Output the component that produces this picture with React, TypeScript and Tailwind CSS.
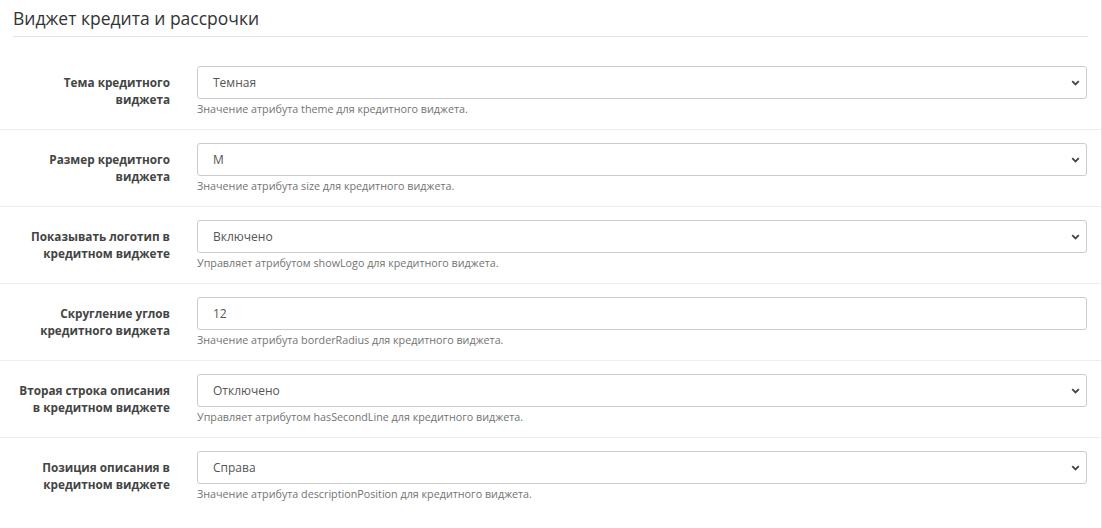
const fields = [
  {
    label: "Тема кредитного виджета",
    value: "Темная",
    help: "Значение атрибута theme для кредитного виджета.",
    select: true,
  },
  {
    label: "Размер кредитного виджета",
    value: "M",
    help: "Значение атрибута size для кредитного виджета.",
    select: true,
  },
  {
    label: "Показывать логотип в кредитном виджете",
    value: "Включено",
    help: "Управляет атрибутом showLogo для кредитного виджета.",
    select: true,
  },
  {
    label: "Скругление углов кредитного виджета",
    value: "12",
    help: "Значение атрибута borderRadius для кредитного виджета.",
    select: false,
  },
  {
    label: "Вторая строка описания в кредитном виджете",
    value: "Отключено",
    help: "Управляет атрибутом hasSecondLine для кредитного виджета.",
    select: true,
  },
  {
    label: "Позиция описания в кредитном виджете",
    value: "Справа",
    help: "Значение атрибута descriptionPosition для кредитного виджета.",
    select: true,
  },
];

function Chevron() {
  return (
    <svg width="9" height="6" viewBox="0 0 9 6" className="text-[#444]">
      <polyline
        points="1.2,1.2 4.5,4.5 7.8,1.2"
        fill="none"
        stroke="currentColor"
        strokeWidth="1.8"
      />
    </svg>
  );
}

export default function App() {
  return (
    <div
      className="min-h-[528px] w-full border-r border-[#e3e3e3] bg-white"
      style={{ fontFamily: '"Open Sans", "Liberation Sans", sans-serif' }}
    >
      <div className="px-[13px] pt-[8px]">
        <h3 className="border-b border-[#e2e2e2] pb-[8px] text-[17.5px] leading-[20px] font-normal text-[#333]">
          Виджет кредита и рассрочки
        </h3>
      </div>
      <div className="mt-[15px]">
        {fields.map((f, idx) => (
          <div
            key={idx}
            className={`flex border-t pt-[13px] pb-[12px] ${
              idx === 0 ? "border-transparent" : "border-[#ededed]"
            }`}
          >
            <label className="w-[185px] shrink-0 px-[15px] pt-[8px] text-right text-[11.75px] leading-[17px] font-bold text-[#444]">
              {f.label}
            </label>
            <div className="flex-1 pl-[12px] pr-[14px]">
              <div className="flex h-[33px] items-center justify-between rounded-[3px] border border-[#ccc] bg-white pl-[15px] pr-[6px] text-[12px] text-[#555]">
                <span>{f.value}</span>
                {f.select && <Chevron />}
              </div>
              <p className="mt-[2px] text-[10.75px] leading-[16px] text-[#737373]">
                {f.help}
              </p>
            </div>
          </div>
        ))}
      </div>
    </div>
  );
}
